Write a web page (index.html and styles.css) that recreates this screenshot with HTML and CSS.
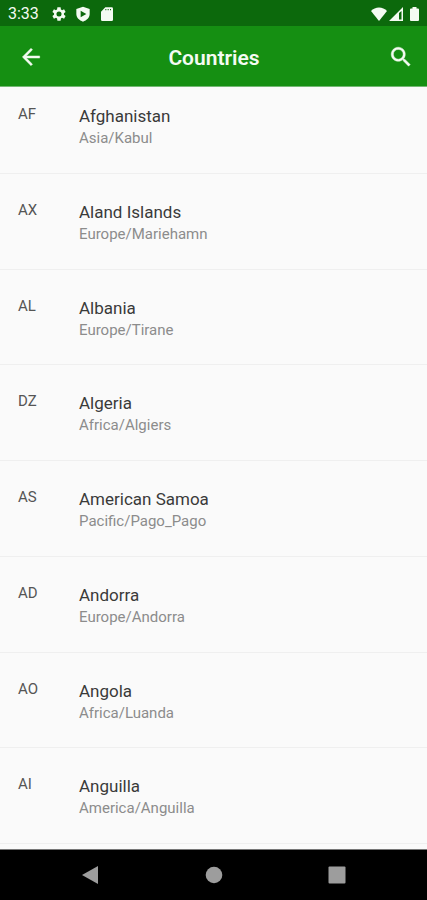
FILE: index.html
```html
<!DOCTYPE html>
<html lang="en">
<head>
<meta charset="utf-8">
<meta name="viewport" content="width=device-width, initial-scale=1">
<title>Countries</title>
<link rel="stylesheet" href="styles.css">
</head>
<body>
<div class="status-bar">
  <time class="clock">3:33</time>
  <svg class="status-icon" viewBox="0 0 24 24" aria-hidden="true"><path fill-rule="evenodd" d="M19.400 13a7.500 7.500 0 0 0 0-2l2.500-2-2.300-4-3 1.200a7.500 7.500 0 0 0-1.700-1L14.400 2H9.600l-.5 3.200a7.500 7.500 0 0 0-1.700 1L4.400 5 2.100 9l2.500 2a7.500 7.500 0 0 0 0 2l-2.500 2 2.300 4 3-1.200a7.500 7.500 0 0 0 1.700 1l.5 3.200h4.800l.5-3.200a7.500 7.500 0 0 0 1.700-1l3 1.200 2.300-4zM12 15.800a3.800 3.800 0 1 1 0-7.600 3.800 3.800 0 0 1 0 7.600z"/></svg>
  <svg class="status-icon" viewBox="0 0 24 24" aria-hidden="true"><path fill-rule="evenodd" d="M12 1 2 4.500V12c0 5.500 4.300 9.500 10 11.500 5.700-2 10-6 10-11.500V4.500zM8.500 7v10l8.500-5z"/></svg>
  <svg class="status-icon" viewBox="0 0 24 24" aria-hidden="true"><path fill-rule="evenodd" d="M9.500 2H19a2 2 0 0 1 2 2v16.500a2 2 0 0 1-2 2H5a2 2 0 0 1-2-2V8.500zM9.500 4.500v2H11v-2zm3.500 0v2h1.500v-2zm3.500 0v2H18v-2z"/></svg>
  <div class="signals">
    <svg class="wifi" viewBox="0 0 16 14" aria-hidden="true"><path d="M8 14 0 4C4-.7 12-.7 16 4z"/></svg>
    <svg class="cell" viewBox="0 0 14 14" aria-hidden="true"><path fill-rule="evenodd" d="M14 0v14H0zM10 6v6.500h2.500V4z"/></svg>
    <svg class="battery" viewBox="0 0 9 14" aria-hidden="true"><path d="M2.500 0h4v1.500H8a1 1 0 0 1 1 1V13a1 1 0 0 1-1 1H1a1 1 0 0 1-1-1V2.500a1 1 0 0 1 1-1h1.500z"/></svg>
  </div>
</div>
<header class="app-bar">
  <button class="icon-button" type="button" aria-label="Back"><svg viewBox="0 0 24 24"><path d="M20 11H7.800l5.600-5.600L12 4l-8 8 8 8 1.400-1.400L7.800 13H20z"/></svg></button>
  <h1 class="title">Countries</h1>
  <button class="icon-button" type="button" aria-label="Search"><svg viewBox="0 0 24 24"><path d="M15.500 14h-.8l-.3-.3A6.500 6.500 0 1 0 13.700 14.400l.3.3v.8l5 5 1.500-1.500zM9.500 14a4.500 4.500 0 1 1 0-9 4.500 4.500 0 0 1 0 9z"/></svg></button>
</header>
<main class="content">
  <ul class="countries">
    <li class="country"><span class="code">AF</span><div><h2 class="name">Afghanistan</h2><p class="zone">Asia/Kabul</p></div></li>
    <li class="country"><span class="code">AX</span><div><h2 class="name">Aland Islands</h2><p class="zone">Europe/Mariehamn</p></div></li>
    <li class="country"><span class="code">AL</span><div><h2 class="name">Albania</h2><p class="zone">Europe/Tirane</p></div></li>
    <li class="country"><span class="code">DZ</span><div><h2 class="name">Algeria</h2><p class="zone">Africa/Algiers</p></div></li>
    <li class="country"><span class="code">AS</span><div><h2 class="name">American Samoa</h2><p class="zone">Pacific/Pago_Pago</p></div></li>
    <li class="country"><span class="code">AD</span><div><h2 class="name">Andorra</h2><p class="zone">Europe/Andorra</p></div></li>
    <li class="country"><span class="code">AO</span><div><h2 class="name">Angola</h2><p class="zone">Africa/Luanda</p></div></li>
    <li class="country"><span class="code">AI</span><div><h2 class="name">Anguilla</h2><p class="zone">America/Anguilla</p></div></li>
  </ul>
</main>
<nav class="nav-bar" aria-label="System navigation">
  <button class="nav-button" type="button" aria-label="Back"><svg viewBox="0 0 18 18"><path d="M16 0v18L0 9z"/></svg></button>
  <button class="nav-button" type="button" aria-label="Home"><svg viewBox="0 0 18 18"><circle cx="9" cy="9" r="8.300"/></svg></button>
  <button class="nav-button" type="button" aria-label="Recent apps"><svg viewBox="0 0 18 18"><rect x=".5" y=".5" width="17" height="17" rx="1"/></svg></button>
</nav>
</body>
</html>
```
FILE: styles.css
```css
* {
  box-sizing: border-box;
  margin: 0;
  padding: 0;
}

body {
  display: flex;
  flex-direction: column;
  min-height: 100vh;
  background: #fafafa;
  font-family: Roboto, "Liberation Sans", sans-serif;
}

button {
  border: 0;
  background: none;
  color: inherit;
}

svg {
  display: block;
  fill: currentColor;
}

.status-bar {
  display: flex;
  align-items: center;
  gap: 8px;
  height: 26px;
  padding: 2px 8px 0;
  background: #0c690c;
  color: #f4fbf2;
}

.clock {
  margin-right: 4px;
  font-size: 16px;
  line-height: 24px;
}

.status-icon {
  width: 16px;
  height: 16px;
}

.signals {
  display: flex;
  gap: 2px;
  margin-left: auto;
}

.wifi {
  width: 16px;
  height: 14px;
}

.cell {
  width: 14px;
  height: 14px;
}

.battery {
  width: 9px;
  height: 14px;
  margin-left: 5px;
}

.app-bar {
  display: flex;
  align-items: center;
  justify-content: space-between;
  height: 61px;
  padding: 2px 13px 0 18px;
  border-bottom: 1px solid #73b873;
  background: #158f12;
  color: #f4fbf2;
}

.icon-button svg {
  width: 26px;
  height: 26px;
  stroke: currentColor;
  stroke-width: .4;
}

.title {
  padding: 2px 4px 0 0;
  font-size: 21px;
  font-weight: 600;
  line-height: 28px;
}

.content {
  display: flex;
  flex: 1;
  overflow: hidden;
  padding-bottom: 5px;
}

.countries {
  display: grid;
  flex: 1;
  grid-auto-rows: 1fr;
  margin-top: -9px;
  list-style: none;
}

.country {
  display: grid;
  grid-template-columns: 61px 1fr;
  align-items: start;
  padding: 26px 18px 0;
  border-bottom: 1px solid #efefef;
}

.code {
  color: #555;
  font-size: 15px;
  line-height: 20px;
}

.name {
  color: #3a3a3a;
  font-size: 17px;
  line-height: 24px;
  font-weight: 400;
}

.zone {
  color: #8c8c8c;
  font-size: 15px;
  line-height: 20px;
}

.nav-bar {
  display: flex;
  align-items: center;
  justify-content: center;
  gap: 105px;
  height: 51px;
  border-top: 1px solid #777;
  background: #000;
  color: #9d9d9d;
}

.nav-button svg {
  width: 18px;
  height: 18px;
}
```
